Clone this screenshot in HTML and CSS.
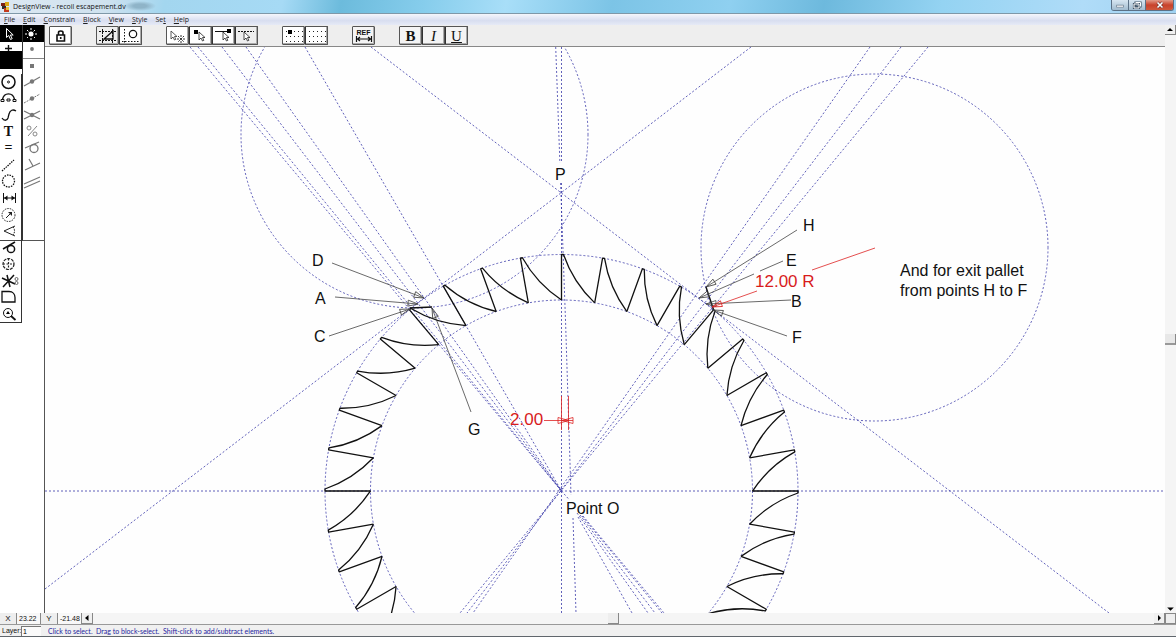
FILE: index.html
```html
<!DOCTYPE html>
<html lang="en">
<head>
<meta charset="utf-8">
<title>DesignView - recoil escapement.dv</title>
<link rel="stylesheet" href="styles.css">
</head>
<body>
<div class="window">
  <header class="titlebar">
    <svg class="app-icon" viewBox="0 0 10 12"><path fill="#7c1f14" d="M1 2h4v3H1z"/><path fill="#d9a514" d="M5 1h4v4H5z"/><path fill="#2c2c2c" d="M2 5h4v3H2z"/><path fill="#c33a1b" d="M4 7h5v4H4z"/><path fill="#e8c23a" d="M6 6h3v3H6z"/></svg>
    <h1 class="title">DesignView - recoil escapement.dv</h1>
    <div class="window-buttons">
      <button class="win-btn" aria-label="Minimize"><svg viewBox="0 0 16 10"><path fill="#fff" stroke="#55697c" stroke-width=".6" d="M4.500 5.200h7v2h-7z"/></svg></button>
      <button class="win-btn" aria-label="Restore"><svg viewBox="0 0 16 10"><path fill="none" stroke="#44586b" stroke-width="2.200" d="M6.500 2.500h5v4h-5zM5 4h5v4H5z"/><path fill="none" stroke="#fff" d="M6.500 2.500h5v4M5 4h5v4H5z"/></svg></button>
      <button class="win-btn win-close" aria-label="Close"><svg viewBox="0 0 16 10"><path stroke="#6d2b26" stroke-width="2.800" d="M5.500 2.500l5 5m0-5l-5 5"/><path stroke="#fff" stroke-width="1.600" d="M5.500 2.500l5 5m0-5l-5 5"/></svg></button>
    </div>
  </header>

  <nav class="menubar">
    <button><u>F</u>ile</button><button><u>E</u>dit</button><button><u>C</u>onstrain</button><button><u>B</u>lock</button><button><u>V</u>iew</button><button><u>S</u>tyle</button><button>Se<u>t</u></button><button><u>H</u>elp</button>
  </nav>

  <div class="workspace">
    <aside class="palettes">
      <div class="palette">
        <button class="cell-active" aria-label="Select"><svg class="icon" viewBox="0 0 20 16"><path fill="#000" stroke="#fff" d="M6.500 2.500v9l2.200-2 1.800 4 1.700-.8-1.800-3.700h2.800z"/></svg></button>
        <button class="cell-half" aria-label="Point"><svg class="icon" viewBox="0 0 20 9"><path stroke="#111" stroke-width="1.400" d="M5 6.500h7M8.500 3v6"/></svg></button>
        <div class="cell-filled"></div>
        <div class="sliver"></div>
        <div class="tools">
          <button aria-label="Circle"><svg class="icon" viewBox="0 0 20 16"><g fill="none" stroke="#111"><circle cx="8.500" cy="8" r="6.500" stroke-width="1.500"/><circle cx="8.500" cy="8" r="1"/></g></svg></button>
          <button aria-label="Arc"><svg class="icon" viewBox="0 0 20 16"><g fill="none" stroke="#111"><path stroke-width="1.400" d="M2.500 8.500C4 1 13 1 14.500 8.500"/><path d="M1 8.500h3v2H1zM13 8.500h3v2h-3zM7 8h3v2H7z"/></g></svg></button>
          <button aria-label="Curve"><svg class="icon" viewBox="0 0 20 16"><path fill="none" stroke="#111" stroke-width="1.300" d="M2 11c2 3 5 3 6 0l1-4c1-4 4-5 7-3"/></svg></button>
          <button class="glyph">T</button>
          <button class="glyph">=</button>
          <button aria-label="Dashed line"><svg class="icon" viewBox="0 0 20 16"><path stroke="#111" stroke-width="1.300" stroke-dasharray="1.500 1" d="M2 14L14 3"/></svg></button>
          <button aria-label="Dashed circle"><svg class="icon" viewBox="0 0 20 16"><circle fill="none" stroke="#111" stroke-width="1.300" stroke-dasharray="1.500 1.100" cx="8.500" cy="8" r="6"/></svg></button>
          <button aria-label="Dimension"><svg class="icon" viewBox="0 0 20 16"><path fill="none" stroke="#111" d="M3.500 3v10M15.500 3v10M4 8h11"/><path fill="#111" d="M4 8l3.500-2.500v5zM15 8l-3.500-2.500v5z"/></svg></button>
          <button aria-label="Radius dimension"><svg class="icon" viewBox="0 0 20 16"><g fill="none" stroke="#222"><circle cx="8.500" cy="8" r="6.500" stroke-dasharray="1.500 1.100"/><path d="M6 11l5-5"/></g><path fill="#222" d="M12 5v4L8 5z"/></svg></button>
          <button aria-label="Angle dimension"><svg class="icon" viewBox="0 0 20 16"><path fill="none" stroke="#222" d="M15 3L4 8l11 5"/><path fill="none" stroke="#222" stroke-dasharray="1.500 1" d="M13 4c2 2 2 6 0 8"/></svg></button>
          <button aria-label="Tangent"><svg class="icon" viewBox="0 0 20 16"><g fill="none" stroke="#111" stroke-width="1.500"><circle cx="11" cy="9" r="3.600"/><path d="M3 9l12-7"/></g></svg></button>
          <button aria-label="Construction circle"><svg class="icon" viewBox="0 0 20 16"><g fill="none" stroke="#222" stroke-width="1.200"><circle cx="8.500" cy="8" r="5.500" stroke-dasharray="3 1"/><path stroke-dasharray="2 1.500" d="M3 8h11M8.500 2.500v11"/></g></svg></button>
          <button aria-label="Trim"><svg class="icon" viewBox="0 0 20 16"><g fill="none" stroke="#111"><path stroke-width="1.500" d="M2 5l13 6M3 14L14 2M7 2l3 12"/><circle cx="16.500" cy="6" r="1.500" stroke="#666"/><circle cx="16.500" cy="10" r="1.500" stroke="#666"/></g></svg></button>
          <button aria-label="Fillet"><svg class="icon" viewBox="0 0 20 16"><path fill="none" stroke="#111" stroke-width="1.300" d="M2 2.500h7c4 0 6 3 6 6V13H2z"/></svg></button>
          <button aria-label="Zoom"><svg class="icon" viewBox="0 0 20 16"><g fill="none" stroke="#111"><circle cx="8" cy="7" r="4.500"/><path stroke-width="1.800" d="M11 10l4.500 4"/></g><path d="M6 8h4L8 5z"/></svg></button>
        </div>
      </div>
      <div class="palette palette-snap">
        <button class="cell-active" aria-label="Snap any"><svg class="icon" viewBox="0 0 20 16"><circle cx="8" cy="8" r="2.500" fill="#fff"/><path stroke="#fff" stroke-dasharray="2 8 2" d="M2 8h12M8 2v12M4 4l8 8M12 4l-8 8"/></svg></button>
        <button class="cell-dot" aria-label="Snap point"><svg class="icon" viewBox="0 0 20 16"><circle cx="9" cy="7" r="1.900" fill="#777"/></svg></button>
        <button class="cell-square" aria-label="Snap handle"><svg class="icon" viewBox="0 0 20 14"><path fill="#777" d="M7 5h4v4H7z"/></svg></button>
        <div class="snaps">
          <button aria-label="Snap on line"><svg class="icon" viewBox="0 0 20 16"><path stroke="#777" stroke-width="1.200" d="M1 13l16-9"/><circle cx="9" cy="8.500" r="2.200" fill="#777"/></svg></button>
          <button aria-label="Snap on extension"><svg class="icon" viewBox="0 0 20 16"><path stroke="#777" stroke-dasharray="2 1" d="M1 13l16-9"/><circle cx="9" cy="8.500" r="2.200" fill="#777"/></svg></button>
          <button aria-label="Snap intersection"><svg class="icon" viewBox="0 0 20 16"><path stroke="#777" stroke-width="1.300" d="M1 4l16 8M1 12l16-8"/><circle cx="9" cy="8" r="2.200" fill="#777"/></svg></button>
          <button aria-label="Snap percent"><svg class="icon" viewBox="0 0 20 16"><g fill="none" stroke="#888"><path d="M5 13l9-10"/><circle cx="6" cy="5" r="2"/><circle cx="12" cy="11" r="2"/></g></svg></button>
          <button aria-label="Snap tangent"><svg class="icon" viewBox="0 0 20 16"><g fill="none" stroke="#777" stroke-width="1.300"><path d="M2 8l14-6"/><circle cx="11" cy="8.500" r="4"/></g></svg></button>
          <button aria-label="Snap perpendicular"><svg class="icon" viewBox="0 0 20 16"><path stroke="#777" stroke-width="1.200" d="M2 13l15-7M6 2l4 7"/></svg></button>
          <button aria-label="Snap parallel"><svg class="icon" viewBox="0 0 20 16"><path stroke="#777" stroke-width="1.200" d="M1 10l16-7M1 14l16-7"/></svg></button>
        </div>
      </div>
    </aside>

    <main class="editor">
      <div class="toolbar">
        <div class="group"><button aria-label="Lock"><svg class="icon" viewBox="0 0 20 16"><path fill="none" stroke="#111" stroke-width="1.600" d="M6 7h7.500v6H6zM7.500 7V4.500c0-2 4.500-2 4.500 0V7M9.700 9v2"/></svg></button></div>
        <div class="group">
          <button class="pressed" aria-label="Inside block"><svg class="icon" viewBox="0 0 20 16"><path stroke="#111" stroke-dasharray="2 1" d="M1 3.500h18M1 12.500h18M4.500 1v14M14.500 1v14"/><path fill="none" stroke="#111" stroke-width="1.300" d="M6 11l9-8v8z"/></svg></button>
          <button aria-label="Crossing block"><svg class="icon" viewBox="0 0 20 16"><path stroke="#111" stroke-dasharray="1.500 1.500" d="M3.500 1v14M1 13.500h18"/><circle cx="12" cy="6" r="3.700" fill="none" stroke="#111" stroke-width="1.200"/></svg></button>
        </div>
        <div class="group">
          <button aria-label="Pick any"><svg class="icon" viewBox="0 0 20 16"><path fill="#fff" stroke="#333" stroke-width=".8" d="M3 3v8l2-2 1.500 3 1.300-.6L6.500 8.500H9z"/><path stroke="#333" stroke-dasharray="2 1" d="M9 11h8M13 7v8M10 8l6 6M16 8l-6 6"/></svg></button>
          <button aria-label="Pick point"><svg class="icon" viewBox="0 0 20 16"><path d="M3 2h4v4H3z"/><path fill="#fff" stroke="#222" stroke-width=".8" d="M8 4v8l2-2 1.500 3 1.300-.6-1.300-2.900H14z"/></svg></button>
          <button aria-label="Pick line"><svg class="icon" viewBox="0 0 20 16"><path stroke="#111" d="M1 3.500h14"/><path d="M13 1h4v4h-4z"/><path fill="#fff" stroke="#222" stroke-width=".8" d="M9 4v8l2-2 1.500 3 1.300-.6-1.300-2.900H15z"/></svg></button>
          <button class="pressed" aria-label="Pick construction"><svg class="icon" viewBox="0 0 20 16"><path stroke="#111" stroke-dasharray="2 1" d="M1 3.500h16"/><path fill="#fff" stroke="#222" stroke-width=".8" d="M7 4v8l2-2 1.500 3 1.300-.6-1.300-2.900H13z"/></svg></button>
        </div>
        <div class="group">
          <button aria-label="Snap to grid"><svg class="icon" viewBox="0 0 20 16"><path stroke="#222" stroke-dasharray="1 3" d="M2 3.500h17M2 8.500h17M2 13.500h17"/><path d="M4 2h4v4H4z"/></svg></button>
          <button aria-label="Show grid"><svg class="icon" viewBox="0 0 20 16"><path stroke="#222" stroke-dasharray="1 3" d="M2 3.500h17M2 8.500h17M2 13.500h17"/></svg></button>
        </div>
        <div class="group"><button class="ref" aria-label="Reference dimension"><span>REF</span><svg viewBox="0 0 20 6"><path fill="none" stroke="#111" stroke-width="1.200" d="M2.500 0v6M17.500 0v6M3 3h14M6 1L3.500 3 6 5M14 1l2.500 2L14 5"/></svg></button></div>
        <div class="group text-style"><button><b>B</b></button><button><i>I</i></button><button><u>U</u></button></div>
      </div>

      <svg class="canvas" viewBox="45 47 1120 566" preserveAspectRatio="xMidYMid slice">
        <defs>
          <path id="tooth" d="M0-191V-236.500h2Q11.700-208.500 33.200-188.100"/>
          <g id="teeth3"><use href="#tooth"/><use href="#tooth" transform="rotate(10)"/><use href="#tooth" transform="rotate(20)"/></g>
          <g id="teeth9"><use href="#teeth3"/><use href="#teeth3" transform="rotate(30)"/><use href="#teeth3" transform="rotate(60)"/></g>
          <marker id="arrow" viewBox="0 0 12 8" refX="11" refY="4" markerWidth="12" markerHeight="8" markerUnits="userSpaceOnUse" orient="auto"><path fill="none" stroke="#444" stroke-width=".8" d="M1 1l10 3L1 7z"/></marker>
          <marker id="arrow-red" viewBox="0 0 12 8" refX="11" refY="4" markerWidth="12" markerHeight="8" markerUnits="userSpaceOnUse" orient="auto"><path fill="none" stroke="#d22" stroke-width=".8" d="M1 1l10 3L1 7z"/></marker>
        </defs>

        <g class="construction">
          <circle cx="561.500" cy="491" r="236.500"/>
          <circle cx="561.500" cy="491" r="191"/>
          <circle cx="414.500" cy="134.500" r="173.500"/>
          <circle cx="874.500" cy="247.500" r="173.500"/>
          <path d="M45 491H1165M561.500 183V613M561.500 47V163M555.700 47L559.900 163M560.600 183L565.600 323L571 495M573 518L576 613"/>
          <path d="M45 589L751 47M371 47L1109 613"/>
          <path d="M190 47L561.500 491M198 47L561.500 491M222 47L561.500 491M246 47L561.500 491M305 47L561.500 491"/>
          <path d="M578 517L632 613M577 513L648 613M580 515L655 613M582 516L662 613M583 516L664 613M561.500 491l8 9"/>
          <path d="M870 47L473 613M901 47L467 613M928 47L460 613"/>
        </g>

        <g class="teeth" transform="translate(561.500 491)">
          <use href="#teeth9"/><use href="#teeth9" transform="rotate(90)"/><use href="#teeth9" transform="rotate(180)"/><use href="#teeth9" transform="rotate(270)"/>
        </g>
        <path class="pallet" d="M410 308l22-1M706 287l8 24"/>

        <g class="leaders">
          <path d="M332 263L424 298"/><path d="M335 297L418 304"/><path d="M329 336L410 309"/><path d="M471 412L432 308"/>
          <path d="M797 230L706 287"/><path class="plain" d="M783 261L760 271"/><path d="M754 274L699 298"/><path d="M791 300L706 304"/><path d="M787 336L713 310"/>
        </g>

        <g class="dimensions">
          <path d="M875 248L812 270"/><path class="headed" d="M757 291L712 307"/>
          <path d="M544 420.500h29M561.500 396v34M568.500 396v34M558 417.500v6l11-3zM573 417.500v6l-11-3z"/>
        </g>

        <g class="labels">
          <text x="555" y="180">P</text><text x="312" y="266">D</text><text x="315" y="304">A</text><text x="314" y="342">C</text><text x="468" y="435">G</text>
          <text x="803" y="231">H</text><text x="786" y="266">E</text><text x="791" y="307">B</text><text x="792" y="343">F</text>
          <text x="566" y="514">Point O</text>
          <text x="900" y="276">And for exit pallet</text><text x="900" y="296">from points H to F</text>
          <text class="red" x="755" y="287">12.00 R</text><text class="red" x="510" y="425">2.00</text>
        </g>
      </svg>
    </main>

    <div class="vscroll">
      <button aria-label="Scroll up"><svg viewBox="0 0 10 10"><path d="M2 6h6L5 3z"/></svg></button>
      <div class="vthumb"></div>
      <button class="flat" aria-label="Scroll down"><svg viewBox="0 0 10 10"><path d="M2 4h6L5 7z"/></svg></button>
    </div>
  </div>

  <div class="coords">
    <span class="coord-name">X</span><output class="coord-value">23.22</output>
    <span class="coord-name">Y</span><output class="coord-value">-21.48</output>
    <button aria-label="Scroll left"><svg viewBox="0 0 10 10"><path d="M6.500 2v6L3 5z"/></svg></button>
    <div class="track-before"></div><div class="hthumb"></div><div class="track-after"></div>
    <button aria-label="Scroll right"><svg viewBox="0 0 10 10"><path d="M4 2v6l3-3z"/></svg></button>
    <span class="corner"></span>
  </div>
  <footer class="status">
    <label for="layer">Layer:</label><input id="layer" value="1">
    <p class="hint">Click to select.  Drag to block-select.  Shift-click to add/subtract elements.</p>
  </footer>
</div>
</body>
</html>
```
FILE: styles.css
```css
* { box-sizing: border-box; }
html, body { height: 100%; }
body { margin: 0; font-family: "Liberation Sans", Arial, sans-serif; font-size: 7px; color: #111; }
button { margin: 0; padding: 0; border: 0; background: none; font: inherit; color: inherit; }
svg { display: block; }

.window { display: flex; flex-direction: column; height: 100vh; overflow: hidden; background: #f0f0f0; border-bottom: 1px solid #60666c; }

.titlebar {
  display: flex; align-items: center; height: 14px; flex: none; padding-right: 2px; border-bottom: 1px solid #7f98a8;
  background: radial-gradient(ellipse 16px 5px at 140px 6px, #8fb4c8 40%, transparent), linear-gradient(100deg, #dce8f2 0, #cfe2ef 9%, #a3d6ef 14%, #a6daf5 24%, #6cbbdc 29%, #86cdec 36%, #a8def8 43%, #7cc4e6 52%, #8fd0f0 62%, #6db9dd 70%, #94d3f2 80%, #b0dcf8 92%, #9fd2f2 100%);
}
.app-icon { width: 10px; height: 12px; }
.title { flex: 1; margin: 0 0 0 3px; font: 400 7px/12px "Open Sans", "Noto Sans", sans-serif; color: #111; }
.window-buttons { display: flex; align-self: flex-start; height: 11px; border: 1px solid #5b7186; border-top: 0; border-radius: 0 0 3px 3px; overflow: hidden; }
.win-btn { width: 17px; background: linear-gradient(#d7e6f1, #a2bccf); border-right: 1px solid #5b7186; }
.win-btn svg { height: 10px; margin: 0 auto; width: 16px; }
.win-close { width: 27px; border-right: 0; background: linear-gradient(#e29a88, #c8422b 50%, #d0583c); }

.menubar { display: flex; align-items: center; gap: 8px; height: 11px; flex: none; padding-left: 4px; background: linear-gradient(#f4f6fc, #d8def0 60%, #e6eaf6); color: #222; font: 7px/10px "Open Sans", "Noto Sans", sans-serif; }

.workspace { display: flex; flex: 1; min-height: 0; }
.palettes { display: flex; flex: none; width: 45px; background: #fff; border-right: 1px solid #555; }
.palette { width: 22px; }
.palette button { display: flex; align-items: center; justify-content: flex-start; width: 100%; }
.palette .icon { width: 20px; height: 16px; flex: none; }
.palette .cell-active { height: 17px; background: #000; }
.palette .cell-half { height: 9px; }
.palette .cell-half .icon { height: 9px; }
.cell-filled { height: 18px; background: #000; }
.sliver { height: 5px; }
.tools { display: grid; grid-template-rows: repeat(15, 1fr); height: 249px; border-right: 1px solid #333; border-bottom: 1px solid #333;
  background: linear-gradient(#444, #444) 0 166px / 100% 1px no-repeat; }
.tools .glyph { justify-content: center; padding-right: 4px; font: 700 14px/16px "Liberation Serif", serif; }
.palette-snap { border-left: 1px solid #333; height: 216px; border-bottom: 1px solid #555; }
.palette .cell-dot { height: 17px; border-bottom: 1px solid #888; }
.palette .cell-square { height: 14px; }
.snaps { display: grid; grid-template-rows: repeat(7, 1fr); height: 117px; }

.editor { display: flex; flex-direction: column; flex: 1; min-width: 0; }
.toolbar { display: flex; align-items: center; gap: 24px; height: 22px; flex: none; padding-left: 4px; border-bottom: 1px solid #888; background: #eee; }
.group { display: flex; }
.toolbar button { display: flex; align-items: center; justify-content: center; width: 23px; height: 19px; border: 1px solid #555; border-radius: 1px; background: #fff; box-shadow: inset -1px -1px #aaa; }
.toolbar button + button { border-left-color: #333; }
.toolbar .pressed { background: #eee; }
.toolbar .icon { width: 20px; height: 16px; }
.toolbar .ref { flex-direction: column; background: #f4f4f4; font: 700 7px/7px "Liberation Sans", sans-serif; }
.ref svg { width: 20px; height: 6px; }
.toolbar .text-style button { background: #f4f4f4; font: 15px/16px "Liberation Serif", serif; }

.canvas { flex: 1; min-height: 0; width: 100%; background: #fefefe; }
.construction { fill: none; stroke: #3838a8; stroke-width: .8; stroke-dasharray: 2 2; }
.teeth { fill: none; stroke: #111; stroke-width: 1.300; stroke-linejoin: round; }
.pallet { stroke: #111; stroke-width: 1.400; }
.leaders { fill: none; stroke: #444; stroke-width: .8; }
.leaders path { marker-end: url(#arrow); }
.leaders .plain { marker-end: none; }
.dimensions { fill: none; stroke: #d22; stroke-width: .8; }
.dimensions .headed { marker-end: url(#arrow-red); }
.labels { font-size: 16px; fill: #111; }
.labels .red { fill: #d81c1c; font-size: 17px; }

.vscroll { display: flex; flex-direction: column; justify-content: space-between; flex: none; width: 11px; background: #f5f5f5; }
.vscroll button, .coords button { width: 11px; height: 10px; background: #f0f0f0; border-right: 1px solid #888; border-bottom: 1px solid #888; }
.vscroll .flat { border: 0; background: none; }
.vthumb { height: 11px; background: #e8e8e8; border-right: 1px solid #888; border-bottom: 2px solid #999; margin-top: 40px; }

.coords { display: flex; align-items: stretch; height: 12px; flex: none; background: #f5f5f5; border-bottom: 1px solid #999; line-height: 11px; }
.coord-name { width: 17px; text-align: center; border-right: 1px solid #888; background: #eee; font-size: 8px; }
.coord-value { width: 24px; padding-left: 2px; border-right: 1px solid #888; background: #f8f8f8; }
.coords button { height: 11px; }
.track-before { flex: 49; }
.track-after { flex: 51; }
.hthumb { width: 11px; background: #eee; border-right: 1px solid #888; border-bottom: 1px solid #888; }
.corner { width: 11px; border: 1px solid #888; background: #eee; }

.status { display: flex; align-items: center; height: 11px; flex: none; }
.status label { width: 21px; padding-left: 2px; }
.status input { width: 20px; height: 10px; padding: 0 1px; border: 0; border-left: 1px solid #777; border-top: 1px solid #777; background: #fafafa; font: inherit; }
.hint { margin: 0 0 0 7px; white-space: pre; color: #2424a0; font: 7px/10px Lato, sans-serif; }
```
